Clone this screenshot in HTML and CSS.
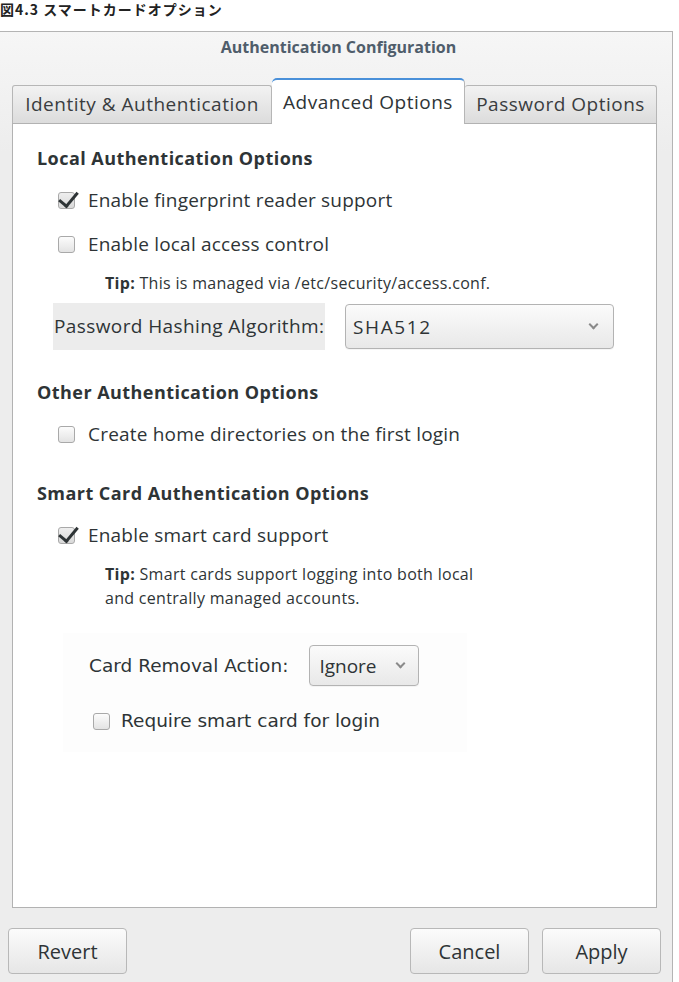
FILE: index.html
```html
<!DOCTYPE html>
<html lang="ja">
<head>
  <meta charset="UTF-8" />
  <title>Authentication Configuration</title>
  <link rel="stylesheet" href="styles.css">
</head>
<body>
  <p class="caption">図4.3 スマートカードオプション</p>

  <div class="window">
    <div class="titlebar">Authentication Configuration</div>

    <!-- Tabs -->
    <div class="tabs">
      <div class="tab">Identity &amp; Authentication</div>
      <div class="tab active">Advanced Options</div>
      <div class="tab">Password Options</div>
    </div>

    <div class="panel">
      <h3 class="section">Local Authentication Options</h3>
      <div class="check-row row-first">
        <span class="checkbox checked"></span>
        <span>Enable fingerprint reader support</span>
      </div>
      <div class="check-row row-second">
        <span class="checkbox"></span>
        <span>Enable local access control</span>
      </div>
      <p class="tip tip-local"><b>Tip:</b> This is managed via /etc/security/access.conf.</p>

      <div class="hash-row">
        <span class="hash-label">Password Hashing Algorithm:</span>
        <div class="select wide">
          <span class="value">SHA512</span>
          <span class="chevron"></span>
        </div>
      </div>

      <h3 class="section section-other">Other Authentication Options</h3>
      <div class="check-row row-first">
        <span class="checkbox"></span>
        <span>Create home directories on the first login</span>
      </div>

      <h3 class="section section-smart">Smart Card Authentication Options</h3>
      <div class="check-row row-first">
        <span class="checkbox checked"></span>
        <span>Enable smart card support</span>
      </div>
      <p class="tip tip-smart"><b>Tip:</b> Smart cards support logging into both local<br>and centrally managed accounts.</p>

      <!-- Smart card sub-options -->
      <div class="card-box">
        <div class="removal-row">
          <span>Card Removal Action:</span>
          <div class="select small">
            <span class="value">Ignore</span>
            <span class="chevron"></span>
          </div>
        </div>
        <div class="check-row plain">
          <span class="checkbox"></span>
          <span>Require smart card for login</span>
        </div>
      </div>
    </div>

    <div class="buttons">
      <button class="btn">Revert</button>
      <div class="btn-group">
        <button class="btn">Cancel</button>
        <button class="btn">Apply</button>
      </div>
    </div>
  </div>
</body>
</html>
```

FILE: styles.css
```css
* {
  margin: 0;
  padding: 0;
  box-sizing: border-box;
}

body {
  background: #fff;
  font-family: 'Open Sans', 'DejaVu Sans', sans-serif;
  color: #2e3436;
}

.caption {
  height: 31px;
  padding-top: 1px;
  font-family: 'Noto Sans CJK JP', sans-serif;
  font-weight: 700;
  font-size: 14px;
  letter-spacing: 1px;
  line-height: 17px;
  color: #222;
}

.window {
  width: 673px;
  height: 951px;
  border-top: 1px solid #b4b4b4;
  border-right: 1px solid #b4b4b4;
  background: linear-gradient(#f6f6f6, #ededed 120px);
  padding: 0 15px 0 12px;
}

.titlebar {
  height: 45px;
  padding-top: 4px;
  padding-left: 8px;
  text-align: center;
  font-weight: 700;
  font-size: 16px;
  line-height: 22px;
  color: #4f5d6b;
}

.tabs {
  display: flex;
  align-items: flex-end;
  height: 46px;
}

.tab {
  height: 38px;
  line-height: 36px;
  font-size: 19px;
  letter-spacing: 0.5px;
  color: #3a3d3f;
  text-align: center;
  border: 1px solid #b6b6b6;
  border-bottom: none;
  border-radius: 3px 3px 0 0;
  background: linear-gradient(#f2f2f2, #dcdcdc);
  white-space: nowrap;
}

.tab:nth-child(1) {
  width: 260px;
}

.tab:nth-child(3) {
  width: 192px;
  border-left: none;
}

.tab.active {
  width: 193px;
  height: 46px;
  line-height: 44px;
  background: #fff;
  border-top: 2px solid #4a90d9;
  border-left: none;
  border-radius: 5px 5px 0 0;
  margin-bottom: -1px;
  position: relative;
  z-index: 1;
  color: #2e3436;
}

.panel {
  height: 785px;
  background: #fff;
  border: 1px solid #b2b2b2;
  padding: 22px 0 0 24px;
  font-size: 19px;
  letter-spacing: 0.2px;
}

.section {
  height: 24px;
  line-height: 24px;
  font-size: 18px;
  letter-spacing: 0.45px;
  font-weight: 700;
  color: #2e3436;
}

.section-other {
  margin-top: 30px;
}

.section-smart {
  margin-top: 35px;
}

.check-row {
  display: flex;
  align-items: center;
  height: 24px;
  line-height: 24px;
  margin-left: 21px;
  gap: 13px;
}

.row-first {
  margin-top: 18px;
}

.row-second {
  margin-top: 20px;
}

.checkbox {
  position: relative;
  width: 17px;
  height: 17px;
  border: 1px solid #a9a9a9;
  border-radius: 3px;
  background: linear-gradient(#fcfcfc, #e3e3e3);
  flex-shrink: 0;
}

/* tick mark that pokes past the box corner */
.checkbox.checked {
  background: linear-gradient(#eeeeee, #d9d9d9);
}

.checkbox.checked::after {
  content: '';
  position: absolute;
  left: 4px;
  top: -5px;
  width: 8px;
  height: 16px;
  border-right: 3px solid #2e3436;
  border-bottom: 3px solid #2e3436;
  transform: rotate(40deg);
}

.tip {
  margin-left: 68px;
  font-size: 16px;
  letter-spacing: 0.3px;
  line-height: 20px;
  color: #2e3436;
}

.tip-local {
  margin-top: 17px;
}

.tip-smart {
  margin-top: 15px;
  line-height: 24px;
}

.hash-row {
  display: flex;
  align-items: center;
  gap: 20px;
  margin: 10px 0 0 16px;
  height: 47px;
}

.hash-label {
  width: 272px;
  height: 47px;
  line-height: 47px;
  background: #ececec;
  padding-left: 1px;
  letter-spacing: 0.4px;
  white-space: nowrap;
}

.select {
  display: flex;
  align-items: center;
  justify-content: space-between;
  border: 1px solid #b3b3b3;
  border-radius: 4px;
  background: linear-gradient(#fbfbfb, #e8e8e8);
  box-shadow: 0 1px 0 rgba(0, 0, 0, 0.04);
}

.select.wide {
  width: 269px;
  height: 45px;
  padding: 0 16px 0 7px;
}

.select.wide .value {
  letter-spacing: 1.6px;
}

.select.small {
  width: 110px;
  height: 41px;
  padding: 0 14px 0 9px;
}

.chevron {
  width: 7px;
  height: 7px;
  border-right: 2px solid #8a8a8a;
  border-bottom: 2px solid #8a8a8a;
  transform: rotate(45deg);
  margin-top: -4px;
}

.card-box {
  width: 404px;
  height: 119px;
  margin: 23px 0 0 26px;
  background: #fdfdfd;
  padding-top: 12px;
  font-family: 'DejaVu Sans', sans-serif;
  font-size: 18.5px;
  letter-spacing: 0;
}

.removal-row {
  display: flex;
  align-items: center;
  gap: 21px;
  padding-left: 26px;
  height: 41px;
}

.removal-row .value {
  font-family: 'Open Sans', sans-serif;
  font-size: 19px;
}

.check-row.plain {
  margin: 23px 0 0 30px;
  gap: 11px;
}

.buttons {
  display: flex;
  justify-content: space-between;
  margin-top: 20px;
  margin-left: -4px;
  margin-right: -4px;
}

.btn-group {
  display: flex;
  gap: 13px;
}

.btn {
  width: 119px;
  height: 46px;
  font-family: 'Open Sans', 'DejaVu Sans', sans-serif;
  font-size: 20px;
  color: #2e3436;
  border: 1px solid #b8b8b8;
  border-radius: 4px;
  background: linear-gradient(#fbfbfb, #e6e6e6);
}
```
